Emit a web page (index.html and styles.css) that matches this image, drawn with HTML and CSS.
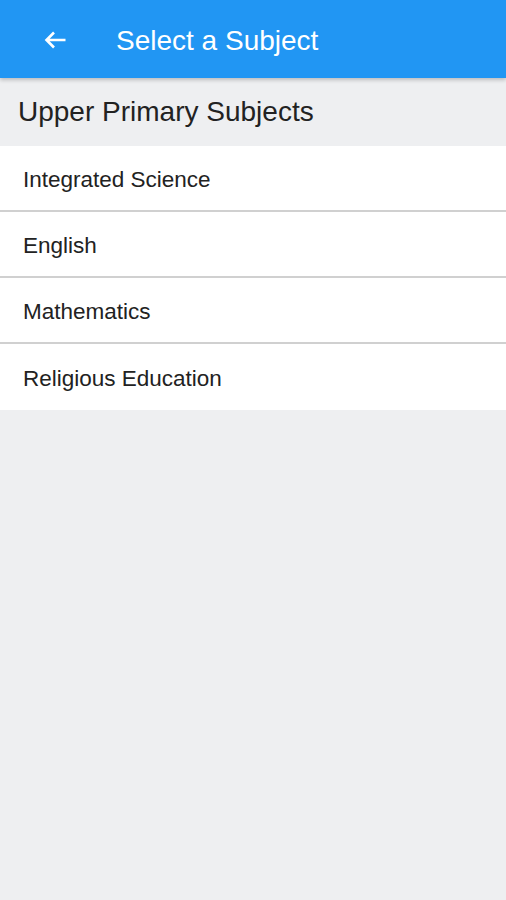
FILE: index.html
```html
<!DOCTYPE html>
<html>
<head>
<meta charset="utf-8">
<link rel="stylesheet" href="styles.css">
</head>
<body>
<div class="app">
  <header class="toolbar">
    <button class="back" aria-label="Back">
      <svg width="24" height="20" viewBox="0 0 24 20"><path d="M22.5 10H3.5M11 2.5L3.5 10l7.5 7.5" fill="none" stroke="#fff" stroke-width="2.6" stroke-linejoin="miter"/></svg>
    </button>
    <h1 class="title">Select a Subject</h1>
  </header>
  <div class="section">Upper Primary Subjects</div>
  <ul class="list">
    <li class="item">Integrated Science</li>
    <li class="item">English</li>
    <li class="item">Mathematics</li>
    <li class="item">Religious Education</li>
  </ul>
</div>
</body>
</html>
```
FILE: styles.css
```css
html, body {
  margin: 0;
  padding: 0;
  height: 100%;
}
body {
  background: #eeeff1;
  font-family: "Liberation Sans", Arial, sans-serif;
}
.app {
  min-height: 900px;
  background: #eeeff1;
}
.toolbar {
  height: 78px;
  background: #2196f3;
  display: flex;
  align-items: center;
  box-shadow: 0 2px 4px rgba(0,0,0,0.22);
  position: relative;
  z-index: 1;
}
.back {
  background: none;
  border: 0;
  padding: 0;
  margin: 2px 0 0 43px;
  width: 24px;
  height: 20px;
  display: flex;
  align-items: center;
  justify-content: center;
}
.title {
  margin: 3px 0 0 49px;
  color: #fff;
  font-weight: normal;
  font-size: 28px;
  line-height: 1;
}
.section {
  height: 68px;
  display: flex;
  align-items: center;
  padding-left: 18px;
  font-size: 28px;
  color: #222;
}
.list {
  list-style: none;
  margin: 0;
  padding: 0;
  background: #fff;
}
.item {
  box-sizing: border-box;
  height: 66px;
  padding: 3px 0 0 23px;
  display: flex;
  align-items: center;
  font-size: 22.5px;
  color: #222;
  border-bottom: 2px solid #d0d0d0;
}
.item:last-child {
  border-bottom: 0;
}
```
